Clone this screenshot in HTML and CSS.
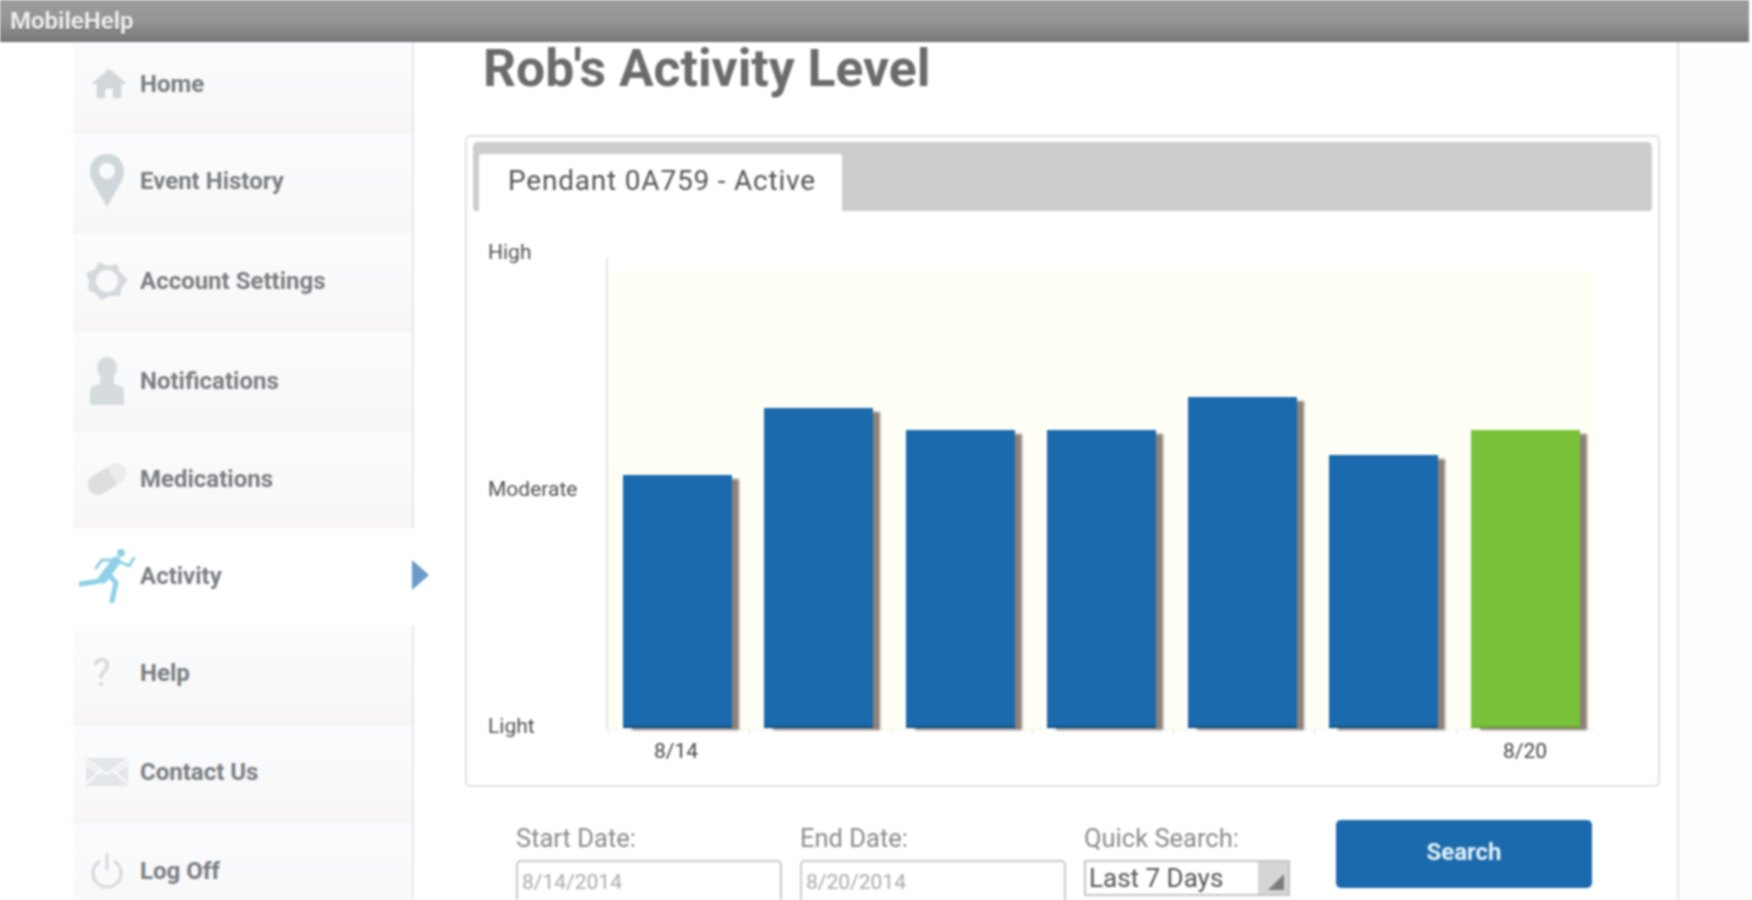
FILE: index.html
```html
<!DOCTYPE html>
<html lang="en">

<head>
    <meta charset="UTF-8">
    <meta name="viewport" content="width=device-width, initial-scale=1.0">
    <title>MobileHelp</title>
    <link rel="stylesheet" href="styles.css">
</head>

<body>
    <div class="top-bar">MobileHelp</div>

    <div class="page">
        <nav class="side-nav">
            <a class="nav-item">
                <span class="nav-icon">
                    <svg class="icon-home" width="36" height="31" viewBox="0 0 38 31"><path d="M19 0 L38 16 L32 16 L32 31 L23 31 L23 21 L15 21 L15 31 L6 31 L6 16 L0 16 Z" fill="#d3d7da"/></svg>
                </span>
                Home
            </a>
            <a class="nav-item">
                <span class="nav-icon">
                    <svg width="34" height="53" viewBox="0 0 34 53"><path fill-rule="evenodd" d="M17 0 C7 0 0 7 0 17 C0 28 11 40 17 53 C23 40 34 28 34 17 C34 7 27 0 17 0 Z M17 9 A8 8 0 1 1 17 25 A8 8 0 1 1 17 9 Z" fill="#d0d7da"/></svg>
                </span>
                Event History
            </a>
            <a class="nav-item">
                <span class="nav-icon">
                    <svg width="42" height="38" viewBox="0 0 42 38"><path fill-rule="evenodd" d="M13 0 L21 4 L31 2 L34 10 L42 18 L36 25 L34 34 L24 34 L15 38 L9 31 L2 28 L3 19 L0 11 L9 7 Z M21 8 A11 11 0 1 0 21 30 A11 11 0 1 0 21 8 Z" fill="#d5d9db"/></svg>
                </span>
                Account Settings
            </a>
            <a class="nav-item">
                <span class="nav-icon">
                    <svg width="34" height="48" viewBox="0 0 34 48"><ellipse cx="17" cy="11" rx="10" ry="11" fill="#d6dbdd"/><path d="M10 20 L24 20 L24 27 L31 29 C33 30 34 32 34 35 L34 48 L0 48 L0 35 C0 32 1 30 3 29 L10 27 Z" fill="#d6dbdd"/></svg>
                </span>
                Notifications
            </a>
            <a class="nav-item">
                <span class="nav-icon">
                    <svg width="42" height="36" viewBox="0 0 42 36"><g transform="rotate(-32 21 18)"><rect x="0" y="8" width="42" height="20" rx="10" fill="#dedede"/><path d="M27 8 L32 8 A10 10 0 0 1 32 28 L27 28 Z" fill="#ececec"/></g></svg>
                </span>
                Medications
            </a>
            <a class="nav-item nav-active">
                <span class="nav-icon">
                    <svg width="56" height="55" viewBox="0 0 56 55">
                        <circle cx="42" cy="5" r="4" fill="#8fd0e6"/>
                        <g fill="none" stroke="#8fd0e6" stroke-linejoin="round" stroke-linecap="round">
                            <path d="M37 13 L24 31" stroke-width="9"/>
                            <path d="M23 32 L15 34 L1 36" stroke-width="5"/>
                            <path d="M29 25 L37 35 L33 53" stroke-width="5"/>
                            <path d="M37 12 L50 18 L55 10" stroke-width="3"/>
                            <path d="M37 12 L23 12 L17 20" stroke-width="3"/>
                        </g>
                    </svg>
                </span>
                Activity
                <span class="nav-arrow"></span>
            </a>
            <a class="nav-item">
                <span class="nav-icon nav-question">?</span>
                Help
            </a>
            <a class="nav-item">
                <span class="nav-icon">
                    <svg width="42" height="28" viewBox="0 0 42 28"><rect width="42" height="28" fill="#e3e6ea"/><path d="M0 1 L21 16 L42 1 M0 26 L15 12 M42 26 L27 12 M0 6 L15 16 M42 6 L27 16" fill="none" stroke="#fbfbfc" stroke-width="2"/></svg>
                </span>
                Contact Us
            </a>
            <a class="nav-item">
                <span class="nav-icon">
                    <svg width="32" height="36" viewBox="0 0 32 36"><path d="M9 8 A14 14 0 1 0 23 8" fill="none" stroke="#d6d8da" stroke-width="3"/><path d="M16 0 L16 17" stroke="#d6d8da" stroke-width="3"/></svg>
                </span>
                Log Off
            </a>
        </nav>

        <main class="content">
            <h1>Rob's Activity Level</h1>

            <section class="chart-card">
                <div class="tab-bar">
                    <div class="tab">Pendant 0A759 - Active</div>
                </div>

                <div class="chart">
                    <div class="y-labels">
                        <span>High</span>
                        <span>Moderate</span>
                        <span>Light</span>
                    </div>
                    <div class="plot-wrap">
                        <div class="plot" id="plot">
                            <div class="bar" style="height: 253px"></div>
                            <div class="bar" style="height: 320px"></div>
                            <div class="bar" style="height: 298px"></div>
                            <div class="bar" style="height: 298px"></div>
                            <div class="bar" style="height: 331px"></div>
                            <div class="bar" style="height: 273px"></div>
                            <div class="bar bar-today" style="height: 298px"></div>
                        </div>
                        <div class="x-ticks"></div>
                        <div class="x-labels">
                            <span>8/14</span>
                            <span>8/20</span>
                        </div>
                    </div>
                </div>
            </section>

            <form class="search-form">
                <div class="field">
                    <label>Start Date:</label>
                    <input class="date-input" type="text" value="8/14/2014">
                </div>
                <div class="field">
                    <label>End Date:</label>
                    <input class="date-input" type="text" value="8/20/2014">
                </div>
                <div class="field field-quick">
                    <label>Quick Search:</label>
                    <div class="quick-select">
                        <span class="quick-value">Last 7 Days</span>
                        <span class="quick-arrow"></span>
                    </div>
                </div>
                <button type="button" class="btn-search">Search</button>
            </form>
        </main>

        <div class="right-gutter"></div>
    </div>
</body>

</html>
```

FILE: styles.css
```css
html, body {
    height: 100%;
}
body {
    margin: 0;
    background-color: #fff;
    font-family: Roboto, "Liberation Sans", sans-serif;
    overflow: hidden;
    filter: blur(0.8px);
}

.top-bar {
    height: 42px;
    width: 1749px;
    box-sizing: border-box;
    padding-left: 10px;
    background-image: linear-gradient(#9b9b9b 0%, #969696 50%, #787878 100%);
    border-bottom: 1px solid #6f6f6f;
    color: #f0f0f0;
    font-size: 24px;
    font-weight: 700;
    line-height: 42px;
    text-shadow: 0 1px 1px #555;
}

.page {
    display: flex;
    height: 858px;
}

/* left menu */
.side-nav {
    width: 339px;
    margin-left: 73px;
    border-right: 2px solid #e6e6ea;
    flex-shrink: 0;
}
.nav-item {
    display: flex;
    align-items: center;
    position: relative;
    height: 99px;
    box-sizing: border-box;
    padding-bottom: 2px;
    background-image: linear-gradient(#fafcfe 0%, #f9f9f9 75%, #f8f6f5 100%);
    border-bottom: 1px solid #f3f3f3;
    color: #797d81;
    font-size: 24px;
    font-weight: 700;
}
.nav-item:nth-child(1) {
    height: 91px;
    padding-bottom: 7px;
}
.nav-item:nth-child(2) {
    height: 100px;
    padding-bottom: 4px;
}
.nav-item:nth-child(4) {
    height: 100px;
}
.nav-item:nth-child(5) {
    height: 96px;
}
.nav-item:nth-child(7) {
    height: 100px;
    padding-bottom: 3px;
}
.nav-item:nth-child(8) {
    height: 98px;
    padding-bottom: 3px;
}
.nav-active {
    height: 97px;
    margin-left: -4px;
    margin-right: -2px;
    padding-left: 4px;
    background-image: none;
    background-color: #fff;
    border-bottom: none;
}
.nav-icon {
    display: flex;
    justify-content: center;
    align-items: center;
    width: 67px;
    flex-shrink: 0;
}
.icon-home {
    margin-left: 4px;
}
.nav-question {
    box-sizing: border-box;
    padding-right: 10px;
    color: #d6d8da;
    font-size: 38px;
    font-weight: 400;
}
.nav-arrow {
    position: absolute;
    right: -15px;
    top: 32px;
    border-left: 17px solid #6a9bc7;
    border-top: 15px solid transparent;
    border-bottom: 15px solid transparent;
}

/* main column */
.content {
    width: 1265px;
    box-sizing: border-box;
    padding-left: 51px;
    border-right: 2px solid #e8e8ea;
    flex-shrink: 0;
}
h1 {
    margin: 0;
    height: 93px;
    padding-left: 18px;
    color: #6b6b6b;
    font-size: 51.6px;
    font-weight: 700;
    line-height: 54px;
}
.right-gutter {
    flex: 1;
    background-color: #fdfcfe;
}

.chart-card {
    width: 1195px;
    height: 652px;
    box-sizing: border-box;
    padding: 5px 6px 6px 6px;
    border: 2px solid #e2e2e2;
    border-radius: 5px;
}
.tab-bar {
    height: 69px;
    box-sizing: border-box;
    padding: 12px 0 0 6px;
    background-color: #cdcdcd;
    border-radius: 5px 5px 3px 3px;
}
.tab {
    width: 363px;
    height: 57px;
    box-sizing: border-box;
    padding-left: 29px;
    background-color: #fff;
    border-radius: 3px 3px 0 0;
    color: #555;
    font-size: 28px;
    letter-spacing: 0.8px;
    line-height: 54px;
}

.chart {
    display: flex;
    height: 560px;
    padding-top: 29px;
    box-sizing: border-box;
}
.y-labels {
    display: flex;
    flex-direction: column;
    justify-content: space-between;
    width: 133px;
    height: 498px;
    padding-left: 15px;
    box-sizing: border-box;
    color: #4f4f4f;
    font-size: 21px;
}

.plot-wrap {
    width: 989px;
}
.plot {
    display: flex;
    align-items: flex-end;
    gap: 32.3px;
    height: 472px;
    box-sizing: border-box;
    margin-top: 17px;
    padding-left: 15px;
    border-left: 2px solid #e4e4e4;
    background-image: linear-gradient(#fff, #fff);
    background-color: #fffff6;
    background-size: 100% 14px;
    background-repeat: no-repeat;
}
.bar {
    width: 109px;
    flex-shrink: 0;
    box-sizing: border-box;
    margin-bottom: 1px;
    background-color: #1a6aad;
    border-bottom: 2px solid #0e4f85;
    box-shadow: 8px 3px 2px -1px #8c8078;
}
.bar-today {
    background-color: #78c138;
    border-bottom-color: #6aa632;
}
.x-ticks {
    height: 5px;
    border-top: 1px solid #f0f0f0;
    background-image: repeating-linear-gradient(90deg, #e4e4e4 0, #e4e4e4 1px, transparent 1px, transparent 141.3px);
    background-position: 2px 0;
}
.x-labels {
    display: flex;
    justify-content: space-between;
    padding: 4px 48px 0 48px;
    color: #444;
    font-size: 21px;
}

/* date search row */
.search-form {
    display: flex;
    align-items: flex-start;
    margin-top: 33px;
    padding-left: 51px;
}
.field {
    display: flex;
    flex-direction: column;
    width: 266px;
    margin-right: 18px;
    flex-shrink: 0;
}
.field-quick {
    width: 206px;
    margin-right: 46px;
}
.field label {
    height: 40px;
    color: #8a8a8a;
    font-size: 25.5px;
    line-height: 36px;
}
.date-input {
    width: 266px;
    height: 44px;
    box-sizing: border-box;
    padding: 0 4px;
    border: 2px solid #c9c9c9;
    border-radius: 5px;
    color: #a9a9a9;
    font-family: Roboto, "Liberation Sans", sans-serif;
    font-size: 21px;
}
.quick-select {
    display: flex;
    justify-content: space-between;
    height: 36px;
    box-sizing: border-box;
    border: 2px solid #c4c4c4;
    color: #555;
    font-size: 26px;
    line-height: 32px;
    padding-left: 3px;
}
.quick-arrow {
    position: relative;
    width: 30px;
    background-color: #d6d6d6;
}
.quick-arrow::after {
    content: "";
    position: absolute;
    right: 4px;
    bottom: 4px;
    border-left: 16px solid transparent;
    border-bottom: 16px solid #7c7c7c;
}
.btn-search {
    width: 256px;
    height: 68px;
    padding-bottom: 5px;
    border: none;
    border-radius: 5px;
    background-color: #1a6aad;
    color: #e6f2f7;
    font-family: Roboto, "Liberation Sans", sans-serif;
    font-size: 24px;
    font-weight: 700;
}
```
